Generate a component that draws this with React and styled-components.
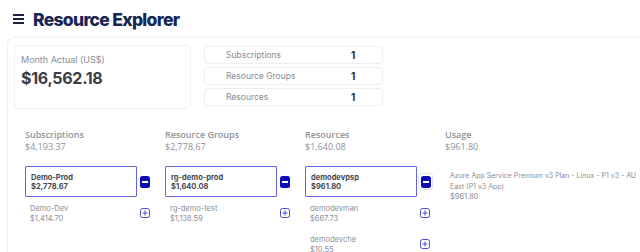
import React from 'react';
import styled, { createGlobalStyle } from 'styled-components';

const GlobalStyle = createGlobalStyle`
    html, body {
        margin: 0;
        padding: 0;
        background: #ffffff;
        font-family: 'Inter', 'Noto Sans', sans-serif;
    }
`;

const columns = [
    {
        title: 'Subscriptions',
        total: '$4,193.37',
        selected: { name: 'Demo-Prod', cost: '$2,778.67' },
        others: [{ name: 'Demo-Dev', cost: '$1,414.70' }],
    },
    {
        title: 'Resource Groups',
        total: '$2,778.67',
        selected: { name: 'rg-demo-prod', cost: '$1,640.08' },
        others: [{ name: 'rg-demo-test', cost: '$1,138.59' }],
    },
    {
        title: 'Resources',
        total: '$1,640.08',
        focused: true,
        selected: { name: 'demodevpsp', cost: '$961.80' },
        others: [
            { name: 'demodevman', cost: '$667.73' },
            { name: 'demodevche', cost: '$10.55' },
        ],
    },
];

const stats = [
    { label: 'Subscriptions', value: 1 },
    { label: 'Resource Groups', value: 1 },
    { label: 'Resources', value: 1 },
];

const MinusIcon = () => (
    <svg width="10" height="12" viewBox="0 0 10 12">
        <rect x="0" y="0" width="10" height="12" rx="2.5" fill="#0c0cb4" />
        <rect x="2" y="5" width="6" height="2" fill="#ffffff" />
    </svg>
);

const PlusIcon = () => (
    <svg width="10" height="10" viewBox="0 0 10 10">
        <rect x="0.5" y="0.5" width="9" height="9" rx="2" fill="none" stroke="#4a4ac4" />
        <path d="M5 2.5v5M2.5 5h5" stroke="#4a4ac4" strokeWidth="1" />
    </svg>
);

const App = () => {
    return (
        <>
            <GlobalStyle />
            <Header>
                <Burger>
                    <span />
                    <span />
                    <span />
                </Burger>
                <Title>Resource Explorer</Title>
            </Header>
            <Card>
                <TopRow>
                    <MonthBox>
                        <MonthLabel>Month Actual (US$)</MonthLabel>
                        <MonthValue>$16,562.18</MonthValue>
                    </MonthBox>
                    <StatList>
                        {stats.map((s) => (
                            <StatRow key={s.label}>
                                <StatLabel>{s.label}</StatLabel>
                                <StatValue>{s.value}</StatValue>
                            </StatRow>
                        ))}
                    </StatList>
                </TopRow>
                <Columns>
                    {columns.map((col) => (
                        <Column key={col.title}>
                            <ColTitle>{col.title}</ColTitle>
                            <ColTotal>{col.total}</ColTotal>
                            <ItemRow>
                                <SelectedBox>
                                    <SelName>{col.selected.name}</SelName>
                                    <SelCost>{col.selected.cost}</SelCost>
                                </SelectedBox>
                                <ToggleButton focused={col.focused}>
                                    <MinusIcon />
                                </ToggleButton>
                            </ItemRow>
                            {col.others.map((o) => (
                                <ItemRow key={o.name}>
                                    <PlainItem>
                                        <ItemName>{o.name}</ItemName>
                                        <ItemCost>{o.cost}</ItemCost>
                                    </PlainItem>
                                    <ToggleButton>
                                        <PlusIcon />
                                    </ToggleButton>
                                </ItemRow>
                            ))}
                        </Column>
                    ))}
                    <Column>
                        <ColTitle>Usage</ColTitle>
                        <ColTotal>$961.80</ColTotal>
                        <UsageItem>
                            <ItemName>Azure App Service Premium v3 Plan - Linux - P1 v3 - AU East (P1 v3 App)</ItemName>
                            <ItemCost>$961.80</ItemCost>
                        </UsageItem>
                    </Column>
                </Columns>
            </Card>
        </>
    );
};

const Header = styled.div`
    display: flex;
    align-items: center;
    gap: 9px;
    height: 38px;
    padding: 0 0 0 13px;
    box-sizing: border-box;
`;

const Burger = styled.div`
    display: flex;
    flex-direction: column;
    gap: 2px;
    width: 11px;
    span {
        display: block;
        height: 2px;
        background: #1c2340;
    }
`;

const Title = styled.h1`
    margin: 0;
    font-family: 'Inter', sans-serif;
    font-weight: 800;
    font-size: 17.5px;
    letter-spacing: -0.7px;
    color: #172557;
`;

const Card = styled.div`
    margin-left: 8px;
    min-height: 214px;
    border-radius: 8px 0 0 0;
    box-shadow: 0 -1px 3px rgba(40, 60, 120, 0.08), -1px 0 2px rgba(40, 60, 120, 0.06);
    padding: 7px 0 0 6px;
    box-sizing: border-box;
`;

const TopRow = styled.div`
    display: flex;
    gap: 13px;
    align-items: flex-start;
`;

const MonthBox = styled.div`
    width: 177px;
    height: 64px;
    box-sizing: border-box;
    border: 1px solid #eef0f3;
    border-radius: 4px;
    padding: 8px 6px;
`;

const MonthLabel = styled.div`
    font-size: 9px;
    color: #8a8d94;
    line-height: 12px;
`;

const MonthValue = styled.div`
    font-size: 16px;
    font-weight: 700;
    letter-spacing: -0.3px;
    color: #3a3d44;
    line-height: 20px;
    margin-top: 2px;
`;

const StatList = styled.div`
    display: flex;
    flex-direction: column;
    gap: 3px;
    width: 179px;
    padding-top: 1px;
`;

const StatRow = styled.div`
    display: flex;
    align-items: center;
    height: 18px;
    box-sizing: border-box;
    border: 1px solid #eceef2;
    border-radius: 3px;
    padding-left: 21px;
`;

const StatLabel = styled.div`
    width: 125px;
    font-size: 8.5px;
    color: #8a8d94;
`;

const StatValue = styled.div`
    font-size: 10px;
    font-weight: 700;
    color: #2a2d33;
`;

const Columns = styled.div`
    display: grid;
    grid-template-columns: repeat(4, 140px);
    padding: 20px 0 0 11px;
`;

const Column = styled.div`
    display: flex;
    flex-direction: column;
`;

const ColTitle = styled.div`
    font-family: 'Open Sans', sans-serif;
    font-size: 9px;
    font-weight: 600;
    color: #8f9299;
    line-height: 12px;
`;

const ColTotal = styled.div`
    font-family: 'Open Sans', sans-serif;
    font-size: 9px;
    color: #8f9299;
    line-height: 12px;
    margin-bottom: 13px;
`;

const ItemRow = styled.div`
    display: flex;
    align-items: center;
    gap: 3px;
    min-height: 31px;
`;

const SelectedBox = styled.div`
    width: 112px;
    height: 31px;
    box-sizing: border-box;
    border: 1px solid #6464e6;
    border-radius: 1px;
    padding: 6px 5px;
`;

const SelName = styled.div`
    font-size: 7.5px;
    font-weight: 700;
    color: #45484f;
    line-height: 9px;
`;

const SelCost = styled.div`
    font-size: 7.5px;
    font-weight: 700;
    color: #45484f;
    line-height: 9px;
`;

const ToggleButton = styled.div`
    display: flex;
    align-items: center;
    justify-content: center;
    width: ${(p) => (p.focused ? '15px' : '10px')};
    height: ${(p) => (p.focused ? '17px' : '12px')};
    margin-left: ${(p) => (p.focused ? '-2px' : '0')};
    box-sizing: border-box;
    border: ${(p) => (p.focused ? '1px solid #e3e4ea' : 'none')};
    border-radius: 3px;
`;

const PlainItem = styled.div`
    width: 112px;
    box-sizing: border-box;
    padding: 2px 5px 0;
`;

const ItemName = styled.div`
    font-size: 7.5px;
    color: #8a8d94;
    line-height: 10px;
`;

const ItemCost = styled.div`
    font-size: 7.5px;
    color: #8a8d94;
    line-height: 10px;
`;

const UsageItem = styled.div`
    width: 195px;
    padding: 4px 0 0 5px;
    box-sizing: border-box;
    ${ItemName} {
        font-size: 7px;
        line-height: 11px;
    }
`;

export default App;
